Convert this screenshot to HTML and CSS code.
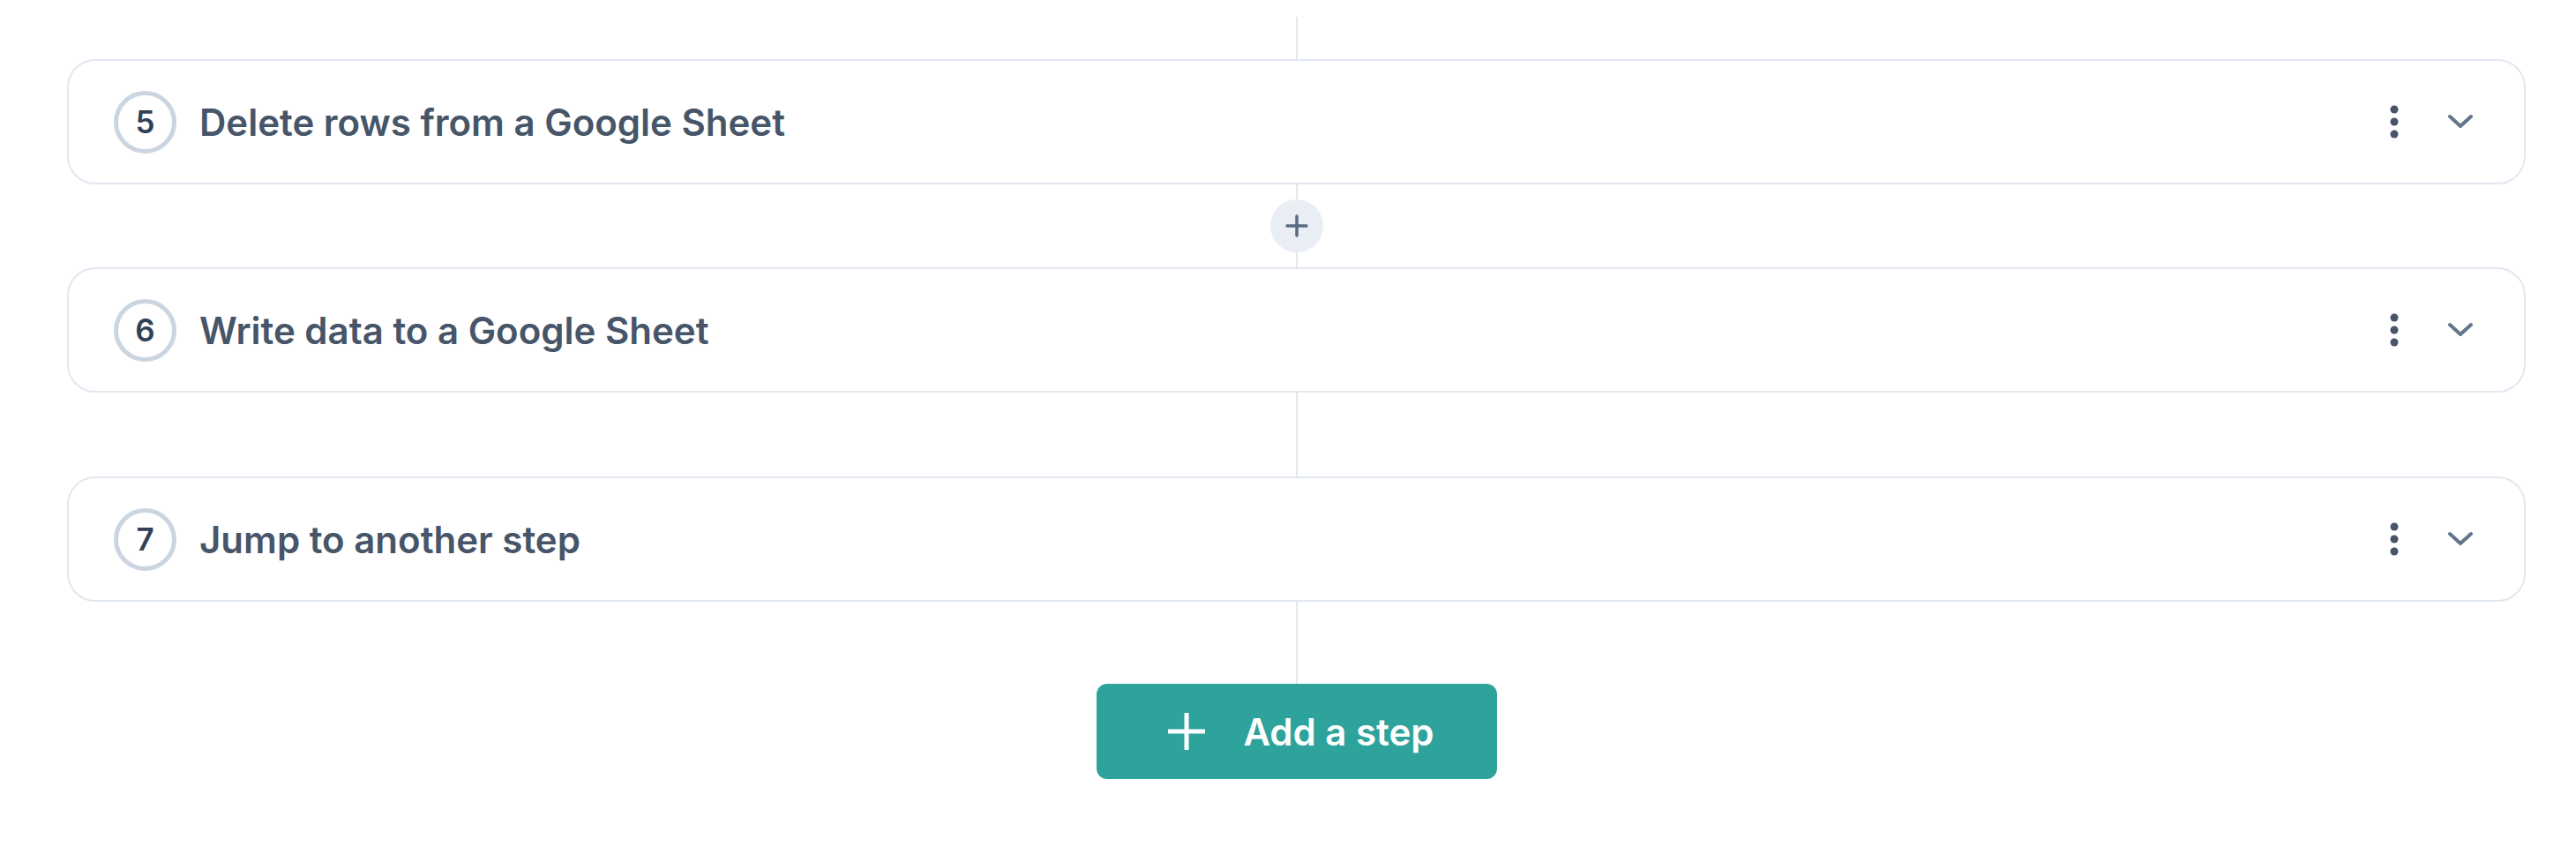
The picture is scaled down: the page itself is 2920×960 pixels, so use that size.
FILE: index.html
```html
<!DOCTYPE html>
<html lang="en">
<head>
    <meta charset="UTF-8">
    <meta name="viewport" content="width=device-width, initial-scale=1.0">
    <title>Workflow steps</title>
    <link rel="stylesheet" href="styles.css">
</head>
<body>
    <div class="flow">
        <div class="line line-top"></div>

        <div class="step">
            <span class="step-num">5</span>
            <span class="step-title">Delete rows from a Google Sheet</span>
            <div class="step-actions">
                <button class="icon-btn" aria-label="More options">
                    <svg width="12" height="40" viewBox="0 0 12 40"><circle cx="6" cy="6" r="4.5"/><circle cx="6" cy="20" r="4.5"/><circle cx="6" cy="34" r="4.5"/></svg>
                </button>
                <button class="icon-btn" aria-label="Expand">
                    <svg width="30" height="20" viewBox="0 0 30 20"><path d="M3 4 L15 15 L27 4"/></svg>
                </button>
            </div>
        </div>

        <div class="joint">
            <div class="line"></div>
            <button class="insert" aria-label="Insert step">
                <svg width="26" height="26" viewBox="0 0 26 26"><path d="M13 2 V24 M2 13 H24"/></svg>
            </button>
            <div class="line"></div>
        </div>

        <div class="step">
            <span class="step-num">6</span>
            <span class="step-title">Write data to a Google Sheet</span>
            <div class="step-actions">
                <button class="icon-btn" aria-label="More options">
                    <svg width="12" height="40" viewBox="0 0 12 40"><circle cx="6" cy="6" r="4.5"/><circle cx="6" cy="20" r="4.5"/><circle cx="6" cy="34" r="4.5"/></svg>
                </button>
                <button class="icon-btn" aria-label="Expand">
                    <svg width="30" height="20" viewBox="0 0 30 20"><path d="M3 4 L15 15 L27 4"/></svg>
                </button>
            </div>
        </div>

        <div class="line line-mid"></div>

        <div class="step">
            <span class="step-num">7</span>
            <span class="step-title">Jump to another step</span>
            <div class="step-actions">
                <button class="icon-btn" aria-label="More options">
                    <svg width="12" height="40" viewBox="0 0 12 40"><circle cx="6" cy="6" r="4.5"/><circle cx="6" cy="20" r="4.5"/><circle cx="6" cy="34" r="4.5"/></svg>
                </button>
                <button class="icon-btn" aria-label="Expand">
                    <svg width="30" height="20" viewBox="0 0 30 20"><path d="M3 4 L15 15 L27 4"/></svg>
                </button>
            </div>
        </div>

        <div class="line line-end"></div>

        <button class="add-step">
            <svg width="44" height="44" viewBox="0 0 44 44"><path d="M22 1 V43 M1 22 H43"/></svg>
            <span>Add a step</span>
        </button>
    </div>
</body>
</html>
```

FILE: styles.css
```css
body {
    margin: 0;
    background-color: #ffffff;
    font-family: Inter, "Noto Sans", sans-serif;
    color: #475569;
}
.flow {
    display: flex;
    flex-direction: column;
    align-items: center;
    padding: 19px 57px 0 76px;
}
.line {
    width: 2px;
    background-color: #e2e8f0;
}
.line-top {
    height: 48px;
}
.line-mid {
    height: 95px;
}
.line-end {
    height: 93px;
}
.step {
    box-sizing: border-box;
    align-self: stretch;
    height: 142px;
    display: flex;
    align-items: center;
    padding: 0 57px 0 51px;
    border: 2px solid #e2e8f0;
    border-radius: 32px;
    background-color: #ffffff;
}
.step-num {
    box-sizing: border-box;
    width: 71px;
    height: 71px;
    flex: none;
    display: flex;
    align-items: center;
    justify-content: center;
    border: 5px solid #cbd5e1;
    border-radius: 50%;
    font-size: 35px;
    font-weight: 600;
    color: #334155;
}
.step-title {
    flex: 1;
    margin-left: 26px;
    font-size: 42px;
    font-weight: 600;
    color: #475569;
}
.step-actions {
    display: flex;
    align-items: center;
    gap: 54px;
}
.icon-btn {
    display: flex;
    align-items: center;
    justify-content: center;
    padding: 0;
    border: none;
    background: none;
    cursor: pointer;
}
.icon-btn circle {
    fill: #475569;
}
.icon-btn path {
    fill: none;
    stroke: #64748b;
    stroke-width: 4;
    stroke-linecap: round;
    stroke-linejoin: round;
}
.joint {
    display: flex;
    flex-direction: column;
    align-items: center;
}
.joint .line {
    height: 17px;
}
.insert {
    width: 60px;
    height: 60px;
    display: flex;
    align-items: center;
    justify-content: center;
    padding: 0;
    border: none;
    border-radius: 50%;
    background-color: #e9eef4;
    cursor: pointer;
}
.insert path {
    stroke: #5b6b7f;
    stroke-width: 3.5;
    stroke-linecap: round;
}
.add-step {
    box-sizing: border-box;
    width: 454px;
    height: 108px;
    display: flex;
    align-items: center;
    justify-content: center;
    gap: 42px;
    padding: 0 0 0 10px;
    border: none;
    border-radius: 12px;
    background-color: #2da39c;
    color: #ffffff;
    font-family: Inter, "Noto Sans", sans-serif;
    font-size: 42px;
    font-weight: 600;
    cursor: pointer;
}
.add-step path {
    stroke: #ffffff;
    stroke-width: 5;
}
```
